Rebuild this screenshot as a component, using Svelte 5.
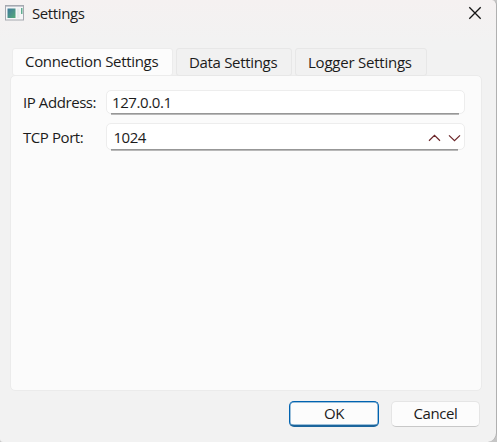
<script>
  const tabs = ['Connection Settings', 'Data Settings', 'Logger Settings'];
  let active = $state(0);
  let ip = '127.0.0.1';
  let port = 1024;
</script>

<div class="window">
  <header>
    <svg class="app" width="20" height="16" viewBox="0 0 20 16">
      <defs>
        <linearGradient id="screen" x1="0" y1="0" x2="1" y2="1">
          <stop offset="0" stop-color="#3f789c" />
          <stop offset="1" stop-color="#54ab78" />
        </linearGradient>
      </defs>
      <rect x="0.5" y="0.5" width="18" height="14.5" fill="#f5f6f7" stroke="#a6a9b0" />
      <path d="M1 1.5h17" stroke="#c5c8cf" />
      <rect x="2.5" y="3.5" width="8" height="9.5" fill="url(#screen)" />
      <rect x="12" y="3.5" width="2.5" height="9.5" fill="#e7ebec" />
      <rect x="16" y="3" width="1.5" height="6" fill="#62ad91" />
    </svg>
    <span class="title">Settings</span>
    <svg class="close" width="14" height="14" viewBox="0 0 14 14">
      <path d="M1.3 1.3l11.4 11.4M12.7 1.3L1.3 12.7" stroke="#151515" stroke-width="1.3" fill="none" />
    </svg>
  </header>

  <nav>
    {#each tabs as tab, i}
      <button class="tab tab{i}" class:active={active === i} onclick={() => (active = i)}><span>{tab}</span></button>
    {/each}
  </nav>

  <main>
    <div class="row first">
      <span class="label ip">IP Address:</span>
      <div class="field"><span class="addr">{ip}</span></div>
    </div>
    <div class="row second">
      <span class="label tcp">TCP Port:</span>
      <div class="field">
        <span class="port">{port}</span>
        <svg class="arrows" width="33" height="8" viewBox="0 0 33 8">
          <path d="M1 6.7L6.5 1.4L12 6.7M21 1.4L26.5 6.7L32 1.4" stroke="#6b2528" stroke-width="1.2" fill="none" />
        </svg>
      </div>
    </div>
  </main>

  <footer>
    <button class="action ok"><span>OK</span></button>
    <button class="action cancel"><span>Cancel</span></button>
  </footer>
</div>

<style>
  :global(body) { background: #c6c6c6; overflow: hidden; }
  .window {
    box-sizing: border-box;
    width: 497px;
    height: 442px;
    background: linear-gradient(#f5f1f1, #f2f2f2 42px);
    border-right: 1px solid #b0b0b0;
    border-radius: 0 5px 9px 3px;
    font-family: "Open Sans", "Noto Sans", sans-serif;
    font-size: 15px;
    line-height: 20px;
    letter-spacing: -0.4px;
    color: #1b1b1b;
    white-space: nowrap;
  }
  button { font: inherit; color: inherit; letter-spacing: inherit; padding: 0; margin: 0; box-sizing: border-box; }
  header { display: flex; height: 48px; box-sizing: border-box; padding-left: 5px; }
  .app { margin-top: 5px; }
  .title { margin: 3px 0 0 7px; }
  .close { margin: 6px 14px 0 auto; }
  nav { display: flex; gap: 3px; padding-left: 12px; height: 27px; }
  .tab {
    height: 28px;
    border: 1px solid #e7e7e7;
    border-radius: 3px;
    background: #f1f1f1;
    text-align: left;
    padding: 0 0 1px 12px;
    letter-spacing: -0.32px;
  }
  .tab.active { background: #fcfcfc; padding-bottom: 2px; border-color: #ececec; }
  .tab0 { width: 161px; }
  .tab1 { width: 116px; }
  .tab2 { width: 132px; letter-spacing: -0.23px; }
  main {
    box-sizing: border-box;
    margin-left: 10px;
    width: 472px;
    height: 316px;
    padding: 14px 0 0 12px;
    border: 1px solid #ebebeb;
    border-radius: 5px;
    background: #fbfbfb;
  }
  .row { display: flex; align-items: flex-start; }
  .label { width: 83px; flex: none; padding-top: 2px; letter-spacing: -0.42px; }
  .field {
    position: relative;
    box-sizing: border-box;
    display: flex;
    align-items: center;
    width: 359px;
    height: 24px;
    padding-left: 5px;
    border: 1px solid #ededed;
    border-radius: 5px;
    background: #fff;
  }
  .addr { padding-bottom: 1px; }
  .port { padding-top: 1px; letter-spacing: -0.5px; }
  .field::after {
    content: "";
    position: absolute;
    left: 4px;
    right: 5px;
    bottom: -2px;
    height: 2px;
    background: linear-gradient(#979797 50%, #b8b8b8 50%);
  }
  .second { margin-top: 9px; }
  .second .label { padding-top: 4px; }
  .second .field { height: 27px; padding-left: 6.5px; }
  .second .field::after { left: 4px; right: 6px; }
  .arrows { margin: 2px 3px 0 auto; }
  footer { display: flex; padding: 10px 0 0 289px; gap: 12px; }
  .action { height: 26px; width: 90px; border-radius: 5px; background: #fcfcfc; padding-bottom: 2px; }
  .ok { border: 1px solid #0063b1; border-bottom: 2px solid #1b659c; box-shadow: inset 0 0 0 .5px #3e84b8; padding-bottom: 1px; }
  .cancel { border: 1px solid #e5e5e5; border-bottom-color: #c8c8c8; width: 89px; }
</style>
